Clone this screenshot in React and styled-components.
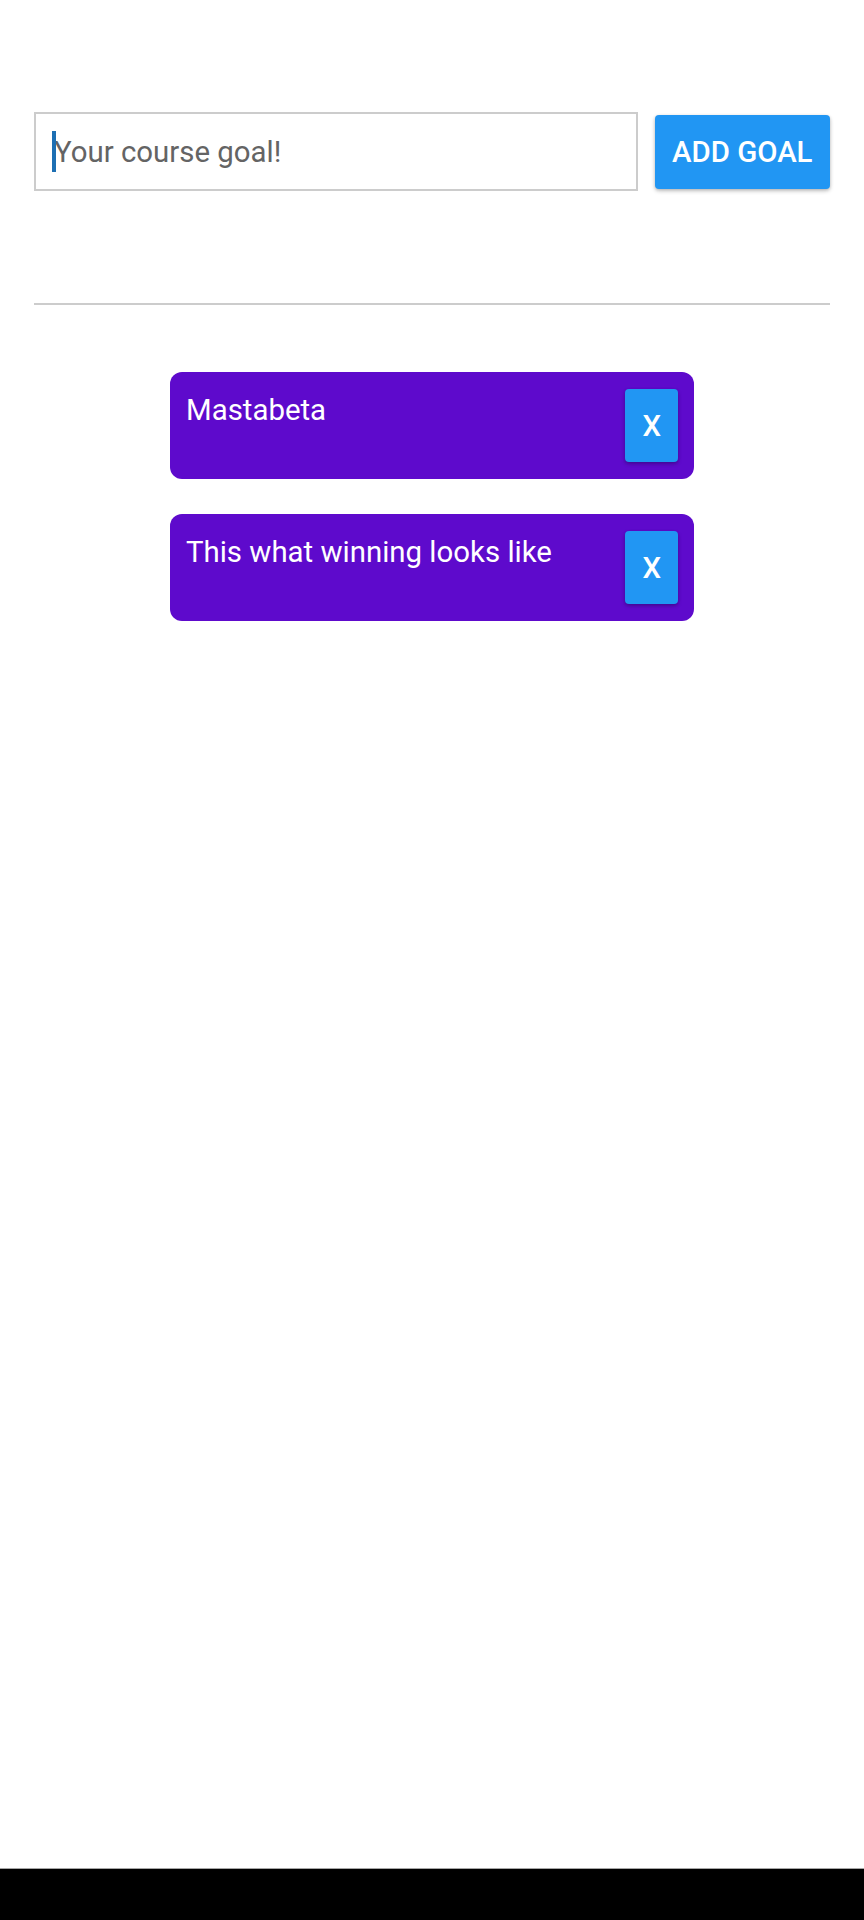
import styled, { createGlobalStyle } from 'styled-components'

const GlobalStyle = createGlobalStyle`
  * {
    box-sizing: border-box;
  }
  body {
    margin: 0;
    background-color: #ffffff;
    font-family: Roboto, "Noto Sans", "Liberation Sans", sans-serif;
  }
`

const Screen = styled.div`
  min-height: 100vh;
  display: flex;
  flex-direction: column;
`

const Main = styled.div`
  flex: 1;
  padding: 0 34px;
`

const InputContainer = styled.div`
  display: flex;
  align-items: center;
  gap: 17px;
  padding: 112px 0 112px;
  border-bottom: 2px solid #cccccc;
`

const InputBox = styled.div`
  position: relative;
  width: 604px;
  height: 79px;
`

const GoalInput = styled.input`
  width: 100%;
  height: 100%;
  border: 2px solid #cccccc;
  padding: 0 0 0 18px;
  font-family: Roboto, "Noto Sans", sans-serif;
  font-size: 29.4px;
  color: #222222;
  background: #ffffff;
  outline: none;
  caret-color: transparent;

  &::placeholder {
    color: #646464;
  }
`

// fake caret, the field is shown focused
const Caret = styled.span`
  position: absolute;
  left: 18px;
  top: 19px;
  width: 3.5px;
  height: 41px;
  background-color: #1d6fb3;
`

const Button = styled.button`
  height: ${({ tall }) => (tall ? '74px' : '73px')};
  padding: 0 17px;
  border: none;
  border-radius: 4px;
  background-color: #2196f3;
  color: #ffffff;
  font-family: Roboto, "Noto Sans", sans-serif;
  font-size: 29.4px;
  font-weight: 500;
  text-transform: uppercase;
  box-shadow: 0 2px 4px rgba(0, 0, 0, 0.22), 0 1px 3px rgba(0, 0, 0, 0.12);
  cursor: pointer;
  flex-shrink: 0;
`

const GoalsList = styled.div`
  display: flex;
  flex-direction: column;
  align-items: center;
  gap: 35px;
  padding-top: 67px;
`

const GoalItem = styled.div`
  width: 524px;
  display: flex;
  justify-content: space-between;
  align-items: flex-start;
  padding: 17px 16px;
  border-radius: 12px;
  background-color: #5e0acc;
`

const GoalText = styled.span`
  margin-top: 4px;
  color: #ffffff;
  font-size: 29.4px;
`

const NavBar = styled.div`
  height: 52px;
  border-top: 1px solid #a6a6a6;
  background-color: #000000;
`

const goals = [
  { id: 'g1', text: 'Mastabeta' },
  { id: 'g2', text: 'This what winning looks like' },
]

const App = () => {
  return (
    <Screen>
      <GlobalStyle />
      <Main>
        <InputContainer>
          <InputBox>
            <GoalInput placeholder="Your course goal!" />
            <Caret />
          </InputBox>
          <Button tall>Add Goal</Button>
        </InputContainer>

        <GoalsList>
          {goals.map((goal) => (
            <GoalItem key={goal.id}>
              <GoalText>{goal.text}</GoalText>
              <Button>X</Button>
            </GoalItem>
          ))}
        </GoalsList>
      </Main>
      <NavBar />
    </Screen>
  )
}

export default App
